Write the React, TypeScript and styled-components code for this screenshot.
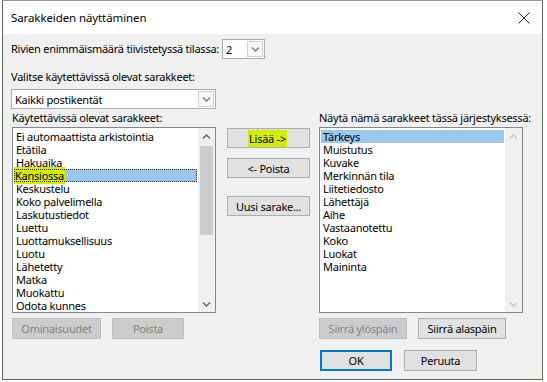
import React from 'react';
import styled, { createGlobalStyle } from 'styled-components';

const GlobalStyle = createGlobalStyle`
  html, body {
    margin: 0;
    padding: 0;
    background: #ffffff;
  }
  body {
    font-family: "Noto Sans", "Open Sans", sans-serif;
    font-size: 11px;
    letter-spacing: -0.25px;
    color: #000;
  }
`;

const Dialog = styled.div`
  margin-left: 2px;
  width: 541px;
  height: 380px;
  box-sizing: border-box;
  border: 1px solid #5a6a55;
  border-top-color: #9a9a9a;
  background: #f0f0f0;
  display: flex;
  flex-direction: column;
`;

const TitleBar = styled.div`
  height: 33px;
  flex: none;
  background: #ffffff;
  display: flex;
  align-items: center;
  justify-content: space-between;
  padding: 0 12px 0 8px;
  font-size: 11.5px;
  letter-spacing: -0.1px;
`;

const CloseIcon = styled.svg`
  width: 12px;
  height: 12px;
`;

const Body = styled.div`
  padding: 5px 0 0 8px;
  display: flex;
  flex-direction: column;
`;

const Row = styled.div<{ mt?: number }>`
  display: flex;
  align-items: center;
  gap: 3px;
  margin-top: ${({ mt }) => mt ?? 0}px;
`;

const Label = styled.div<{ mt?: number }>`
  line-height: 14px;
  margin-top: ${({ mt }) => mt ?? 0}px;
  white-space: nowrap;
`;

const ComboBox = styled.div<{ w: number }>`
  width: ${({ w }) => w}px;
  height: 20px;
  box-sizing: border-box;
  background: #fff;
  border: 1px solid #acacac;
  display: flex;
  align-items: center;
  justify-content: space-between;
  padding-left: 3px;
  padding-right: 1px;
`;

const ComboArrow = styled.div`
  width: 16px;
  height: 16px;
  box-sizing: border-box;
  border: 1px solid #cfcfcf;
  background: #f7f7f7;
  display: flex;
  align-items: center;
  justify-content: center;
`;

const Columns = styled.div`
  display: grid;
  grid-template-columns: 204px 83px 204px;
  column-gap: 10px;
  margin-top: 2px;
  margin-left: 1px;
`;

const Column = styled.div`
  display: flex;
  flex-direction: column;
`;

const MiddleColumn = styled.div`
  display: flex;
  flex-direction: column;
  padding-top: 17px;
  padding-left: 1px;
`;

const ListBox = styled.div`
  margin-top: 2px;
  height: 186px;
  box-sizing: border-box;
  background: #fff;
  border: 1px solid #828790;
  display: flex;
`;

const Items = styled.div`
  flex: 1;
  padding: 2px 1px 0 1px;
  overflow: hidden;
`;

const Item = styled.div<{ selected?: boolean; focused?: boolean }>`
  height: 13px;
  line-height: 13px;
  padding-left: 2px;
  white-space: nowrap;
  box-sizing: border-box;
  background: ${({ selected }) => (selected ? '#99c9ef' : 'transparent')};
  outline: ${({ focused }) => (focused ? '1px dotted #333' : 'none')};
  outline-offset: -1px;
`;

const Marker = styled.span`
  background: #d4ec00;
  padding: 1px 1px;
  margin-left: -2px;
`;

const ScrollBar = styled.div`
  width: 17px;
  flex: none;
  background: #f0f0f0;
  display: flex;
  flex-direction: column;
  align-items: center;
`;

const ScrollArrow = styled.div`
  height: 17px;
  width: 17px;
  display: flex;
  align-items: center;
  justify-content: center;
  flex: none;
`;

const ScrollTrack = styled.div`
  flex: 1;
  width: 100%;
  display: flex;
  flex-direction: column;
  align-items: center;
`;

const Thumb = styled.div`
  width: 13px;
  height: 89px;
  margin-top: 1px;
  background: #cdcdcd;
`;

const ButtonRow = styled.div`
  display: flex;
  gap: 11px;
  margin-top: 5px;
`;

const Button = styled.button<{ w: number; disabled?: boolean; primary?: boolean }>`
  width: ${({ w }) => w}px;
  height: 21px;
  padding: 0;
  box-sizing: border-box;
  font-family: inherit;
  font-size: 11px;
  letter-spacing: -0.25px;
  background: ${({ disabled }) => (disabled ? '#cccccc' : '#e1e1e1')};
  color: ${({ disabled }) => (disabled ? '#838383' : '#000')};
  border: ${({ primary, disabled }) =>
    primary ? '2px solid #0078d7' : `1px solid ${disabled ? '#bfbfbf' : '#adadad'}`};
  display: flex;
  align-items: center;
  justify-content: center;
`;

const MiddleButton = styled(Button)`
  height: 20px;
  margin-bottom: 10px;
  &:nth-child(3) {
    margin-top: 8px;
  }
`;

const Footer = styled.div`
  grid-column: 3;
  display: flex;
  gap: 12px;
  margin-top: 11px;
  padding-left: 1px;
`;

const Chevron: React.FC<{ down?: boolean; color: string }> = ({ down, color }) => (
  <svg width="9" height="6" viewBox="0 0 9 6">
    <path
      d={down ? 'M1 1.5 L4.5 5 L8 1.5' : 'M1 4.5 L4.5 1 L8 4.5'}
      fill="none"
      stroke={color}
      strokeWidth="1.4"
    />
  </svg>
);

const available = [
  'Ei automaattista arkistointia',
  'Etätila',
  'Hakuaika',
  'Kansiossa',
  'Keskustelu',
  'Koko palvelimella',
  'Laskutustiedot',
  'Luettu',
  'Luottamuksellisuus',
  'Luotu',
  'Lähetetty',
  'Matka',
  'Muokattu',
  'Odota kunnes',
];

const shown = [
  'Tärkeys',
  'Muistutus',
  'Kuvake',
  'Merkinnän tila',
  'Liitetiedosto',
  'Lähettäjä',
  'Aihe',
  'Vastaanotettu',
  'Koko',
  'Luokat',
  'Maininta',
];

export default function App() {
  return (
    <>
      <GlobalStyle />
      <Dialog>
        <TitleBar>
          <span>Sarakkeiden näyttäminen</span>
          <CloseIcon viewBox="0 0 12 12">
            <path d="M0.5 0.5 L11.5 11.5 M11.5 0.5 L0.5 11.5" stroke="#222" strokeWidth="1" />
          </CloseIcon>
        </TitleBar>
        <Body>
          <Row>
            <Label>Rivien enimmäismäärä tiivistetyssä tilassa:</Label>
            <ComboBox w={43}>
              <span>2</span>
              <ComboArrow>
                <Chevron down color="#7a7a7a" />
              </ComboArrow>
            </ComboBox>
          </Row>
          <Label mt={11}>Valitse käytettävissä olevat sarakkeet:</Label>
          <Row mt={5}>
            <ComboBox w={205}>
              <span>Kaikki postikentät</span>
              <ComboArrow>
                <Chevron down color="#7a7a7a" />
              </ComboArrow>
            </ComboBox>
          </Row>
          <Columns>
            <Column>
              <Label>Käytettävissä olevat sarakkeet:</Label>
              <ListBox>
                <Items>
                  {available.map((name) => (
                    <Item key={name} selected={name === 'Kansiossa'} focused={name === 'Kansiossa'}>
                      {name === 'Kansiossa' ? <Marker>{name}</Marker> : name}
                    </Item>
                  ))}
                </Items>
                <ScrollBar>
                  <ScrollArrow>
                    <Chevron color="#606060" />
                  </ScrollArrow>
                  <ScrollTrack>
                    <Thumb />
                  </ScrollTrack>
                  <ScrollArrow>
                    <Chevron down color="#606060" />
                  </ScrollArrow>
                </ScrollBar>
              </ListBox>
              <ButtonRow>
                <Button w={89} disabled>Ominaisuudet</Button>
                <Button w={72} disabled>Poista</Button>
              </ButtonRow>
            </Column>
            <MiddleColumn>
              <MiddleButton w={83}>
                <Marker>Lisää -&gt;</Marker>
              </MiddleButton>
              <MiddleButton w={83}>&lt;- Poista</MiddleButton>
              <MiddleButton w={83}>Uusi sarake...</MiddleButton>
            </MiddleColumn>
            <Column>
              <Label>Näytä nämä sarakkeet tässä järjestyksessä:</Label>
              <ListBox>
                <Items>
                  {shown.map((name) => (
                    <Item key={name} selected={name === 'Tärkeys'}>
                      {name}
                    </Item>
                  ))}
                </Items>
                <ScrollBar>
                  <ScrollArrow>
                    <Chevron color="#c8c8c8" />
                  </ScrollArrow>
                  <ScrollTrack />
                  <ScrollArrow>
                    <Chevron down color="#c8c8c8" />
                  </ScrollArrow>
                </ScrollBar>
              </ListBox>
              <ButtonRow>
                <Button w={88} disabled>Siirrä ylöspäin</Button>
                <Button w={88}>Siirrä alaspäin</Button>
              </ButtonRow>
            </Column>
            <Footer>
              <Button w={72} primary>OK</Button>
              <Button w={73}>Peruuta</Button>
            </Footer>
          </Columns>
        </Body>
      </Dialog>
    </>
  );
}
